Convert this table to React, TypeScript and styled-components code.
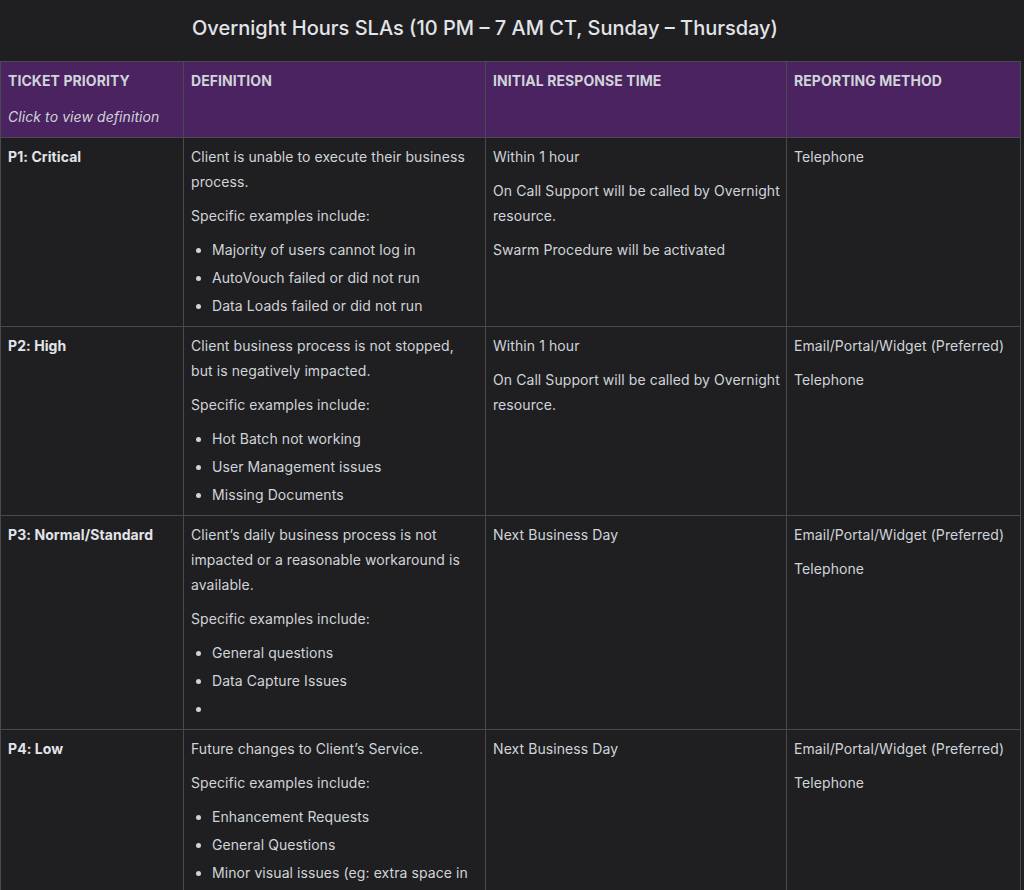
import React from 'react';
import styled, { createGlobalStyle } from 'styled-components';

const COLORS = {
    page: '#1f1f21',
    header: '#4a2360',
    border: '#4a4a4e',
    text: '#d0d4d9',
    strong: '#e2e4e8',
};

const GlobalStyle = createGlobalStyle`
    html, body {
        margin: 0;
        padding: 0;
        background: ${COLORS.page};
    }
    body {
        font-family: Inter, "Noto Sans", sans-serif;
        color: ${COLORS.text};
        font-size: 14px;
        letter-spacing: 0.08px;
    }
`;

const Page = styled.div`
    width: 1024px;
    min-height: 890px;
    overflow: hidden;
`;

const Title = styled.h2`
    margin: 0;
    height: 61px;
    line-height: 56px;
    padding-right: 54px;
    text-align: center;
    font-size: 20px;
    font-weight: 500;
    letter-spacing: 0;
    color: ${COLORS.strong};
`;

const SlaTable = styled.table`
    width: 1020px;
    table-layout: fixed;
    border-collapse: collapse;
    border: 1px solid ${COLORS.border};

    th,
    td {
        box-sizing: border-box;
        border: 1px solid ${COLORS.border};
        padding: 6px 6px 7.5px 7px;
        vertical-align: top;
        text-align: left;
        line-height: 25.2px;
    }
`;

const HeadCell = styled.th<{ $width: number }>`
    width: ${(props) => props.$width}px;
    background: ${COLORS.header};
    font-weight: 700;
    font-size: 14px;
    color: ${COLORS.text};
`;

const Hint = styled.p`
    margin: 11px 0 0;
    font-style: italic;
    font-weight: 400;
`;

const Priority = styled.strong`
    font-weight: 700;
    color: ${COLORS.strong};
`;

const Para = styled.p`
    margin: 0 0 8.8px;
    &:last-child {
        margin-bottom: 0;
    }
`;

const Bullets = styled.ul`
    margin: 0;
    padding-left: 21px;

    li {
        margin-top: 2.8px;
        line-height: 25.2px;
    }
    li:first-child {
        margin-top: 0;
    }
`;

type Row = {
    priority: string;
    definition: string[];
    examples: string[];
    response: string[];
    methods: string[];
};

const ROWS: Row[] = [
    {
        priority: 'P1: Critical',
        definition: ['Client is unable to execute their business process.', 'Specific examples include:'],
        examples: ['Majority of users cannot log in', 'AutoVouch failed or did not run', 'Data Loads failed or did not run'],
        response: ['Within 1 hour', 'On Call Support will be called by Overnight resource.', 'Swarm Procedure will be activated'],
        methods: ['Telephone'],
    },
    {
        priority: 'P2: High',
        definition: ['Client business process is not stopped, but is negatively impacted.', 'Specific examples include:'],
        examples: ['Hot Batch not working', 'User Management issues', 'Missing Documents'],
        response: ['Within 1 hour', 'On Call Support will be called by Overnight resource.'],
        methods: ['Email/Portal/Widget (Preferred)', 'Telephone'],
    },
    {
        priority: 'P3: Normal/Standard',
        definition: [
            'Client\u2019s daily business process is not impacted or a reasonable workaround is available.',
            'Specific examples include:',
        ],
        examples: ['General questions', 'Data Capture Issues', ''],
        response: ['Next Business Day'],
        methods: ['Email/Portal/Widget (Preferred)', 'Telephone'],
    },
    {
        priority: 'P4: Low',
        definition: ['Future changes to Client\u2019s Service.', 'Specific examples include:'],
        examples: [
            'Enhancement Requests',
            'General Questions',
            'Minor visual issues (eg: extra space in the UI)',
            'Report formatting',
        ],
        response: ['Next Business Day'],
        methods: ['Email/Portal/Widget (Preferred)', 'Telephone'],
    },
];

const App: React.FC = () => {
    return (
        <Page>
            <GlobalStyle />
            <Title>Overnight Hours SLAs (10 PM – 7 AM CT, Sunday – Thursday)</Title>
            <SlaTable>
                <thead>
                    <tr>
                        <HeadCell $width={183}>
                            TICKET PRIORITY
                            <Hint>Click to view definition</Hint>
                        </HeadCell>
                        <HeadCell $width={302}>DEFINITION</HeadCell>
                        <HeadCell $width={301}>INITIAL RESPONSE TIME</HeadCell>
                        <HeadCell $width={234}>REPORTING METHOD</HeadCell>
                    </tr>
                </thead>
                <tbody>
                    {ROWS.map((row) => (
                        <tr key={row.priority}>
                            <td>
                                <Priority>{row.priority}</Priority>
                            </td>
                            <td>
                                {row.definition.map((text) => (
                                    <Para key={text}>{text}</Para>
                                ))}
                                <Bullets>
                                    {row.examples.map((item, i) => (
                                        <li key={i}>{item || '\u00a0'}</li>
                                    ))}
                                </Bullets>
                            </td>
                            <td>
                                {row.response.map((text) => (
                                    <Para key={text}>{text}</Para>
                                ))}
                            </td>
                            <td>
                                {row.methods.map((text) => (
                                    <Para key={text}>{text}</Para>
                                ))}
                            </td>
                        </tr>
                    ))}
                </tbody>
            </SlaTable>
        </Page>
    );
};

export default App;
